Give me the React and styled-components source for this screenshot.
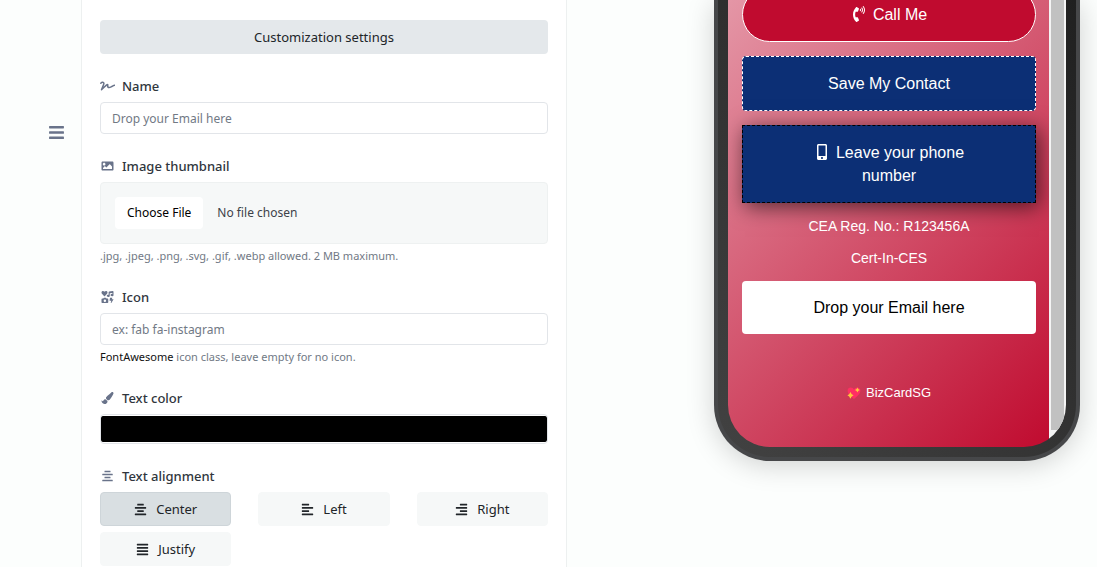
import React, { useState } from 'react';
import styled, { createGlobalStyle } from 'styled-components';
import {
  FaAlignCenter,
  FaAlignJustify,
  FaAlignLeft,
  FaAlignRight,
  FaBars,
  FaIcons,
  FaImage,
  FaMobileAlt,
  FaPaintBrush,
  FaPhoneVolume,
  FaSignature,
} from 'react-icons/fa';

const alignments = [
  { value: 'center', label: 'Center', icon: FaAlignCenter },
  { value: 'left', label: 'Left', icon: FaAlignLeft },
  { value: 'right', label: 'Right', icon: FaAlignRight },
  { value: 'justify', label: 'Justify', icon: FaAlignJustify },
];

const App = () => {
  const [name, setName] = useState('Drop your Email here');
  const [color, setColor] = useState('#000000');
  const [align, setAlign] = useState('center');

  return (
    <>
      <GlobalStyle />
      <Page>
        <Sidebar>
          <MenuButton type="button" aria-label="Reorder block">
            <FaBars />
          </MenuButton>
        </Sidebar>

        <Settings>
          <SettingsButton type="button">Customization settings</SettingsButton>

          <Group>
            <Label htmlFor="name"><FaSignature />Name</Label>
            <TextInput id="name" value={name} onChange={(e) => setName(e.target.value)} />
          </Group>

          <Group>
            <Label htmlFor="thumbnail"><FaImage />Image thumbnail</Label>
            <FileInput id="thumbnail" type="file" />
            <Help>.jpg, .jpeg, .png, .svg, .gif, .webp allowed. 2 MB maximum.</Help>
          </Group>

          <Group>
            <Label htmlFor="icon"><FaIcons />Icon</Label>
            <TextInput id="icon" placeholder="ex: fab fa-instagram" />
            <Help><HelpLink href="#icons">FontAwesome</HelpLink> icon class, leave empty for no icon.</Help>
          </Group>

          <Group>
            <Label htmlFor="color"><FaPaintBrush />Text color</Label>
            <ColorInput id="color" type="color" value={color} onChange={(e) => setColor(e.target.value)} />
          </Group>

          <Group role="radiogroup" aria-labelledby="alignment">
            <Label as="div" id="alignment"><FaAlignCenter />Text alignment</Label>
            <Options>
              {alignments.map(({ value, label, icon: Icon }) => (
                <Option key={value} $active={align === value}>
                  <Radio
                    type="radio"
                    name="align"
                    value={value}
                    checked={align === value}
                    onChange={() => setAlign(value)}
                  />
                  <Icon />
                  {label}
                </Option>
              ))}
            </Options>
          </Group>
        </Settings>

        <Preview>
          <Phone>
            <Screen>
              <Card>
                <CallButton type="button"><FaPhoneVolume />Call Me</CallButton>
                <SaveButton type="button">Save My Contact</SaveButton>
                <PhoneButton type="button"><FaMobileAlt />Leave your phone number</PhoneButton>
                <CardText>CEA Reg. No.: R123456A</CardText>
                <CardText>Cert-In-CES</CardText>
                <EmailButton type="button" $color={color}>{name}</EmailButton>
                <Branding href="#bizcard">
                  <Heart />
                  BizCardSG
                </Branding>
              </Card>
              <ScrollTrack>
                <ScrollThumb />
              </ScrollTrack>
            </Screen>
          </Phone>
        </Preview>
      </Page>
    </>
  );
};

const Heart = () => (
  <svg width="14" height="14" viewBox="0 0 14 14" aria-hidden="true">
    <path
      d="M7 13 C4 10.5 0.6 8 0.6 4.6 C0.6 2.6 2 1.4 3.7 1.4 C5.2 1.4 6.4 2.2 7 3.4 C7.6 2.2 8.8 1.4 10.3 1.4 C12 1.4 13.4 2.6 13.4 4.6 C13.4 8 10 10.5 7 13 Z"
      fill="#ff2f63"
    />
    <path d="M3.4 6 L4.7 8.2 L6.6 9.3 L4.7 10.4 L3.4 12.8 L2.2 10.4 L0.4 9.3 L2.2 8.2 Z" fill="#ffc83d" />
    <path d="M10.4 1.4 L11.2 3.1 L12.8 4 L11.2 4.9 L10.4 6.6 L9.6 4.9 L8 4 L9.6 3.1 Z" fill="#ffc83d" />
  </svg>
);

// Styled components
const GlobalStyle = createGlobalStyle`
  * {
    box-sizing: border-box;
  }

  body {
    margin: 0;
    background: #fcfefd;
    color: #212529;
    font-family: 'Noto Sans', 'Open Sans', sans-serif;
    font-size: 13px;
    line-height: 20px;
  }

  button,
  input {
    font: inherit;
  }
`;

const Page = styled.div`
  display: grid;
  grid-template-columns: 81px minmax(0, 486fr) minmax(0, 530fr);
  min-height: 100vh;
`;

const Sidebar = styled.aside`
  display: flex;
  justify-content: flex-end;
  align-items: flex-start;
  padding: 123px 15px 0 0;
`;

const MenuButton = styled.button`
  display: flex;
  padding: 1px;
  border: 0;
  background: none;
  color: #69738a;
  font-size: 17px;
  cursor: pointer;
`;

const Settings = styled.main`
  padding: 20px 18px 1px;
  border: solid #edf0f0;
  border-width: 0 1px;
  background: #fff;
`;

const SettingsButton = styled.button`
  display: block;
  width: 100%;
  height: 34px;
  border: 0;
  border-radius: 4px;
  background: #e4e8eb;
  color: #212529;
  cursor: pointer;
`;

const Group = styled.div`
  margin-top: 22px;
`;

const Label = styled.label`
  display: flex;
  align-items: center;
  gap: 7px;
  margin-bottom: 6px;
  color: #30363d;
  font-weight: 500;

  svg {
    width: 15px;
    height: 12px;
    color: #69738a;
  }
`;

const TextInput = styled.input`
  display: block;
  width: 100%;
  height: 32px;
  padding: 0 11px;
  border: 1px solid #e2e5e9;
  border-radius: 4px;
  background: #fff;
  color: #717985;
  font-size: 12px;

  &::placeholder {
    color: #717985;
    opacity: 1;
  }
`;

const FileInput = styled.input`
  display: block;
  width: 100%;
  height: 62px;
  padding: 14px;
  border: 1px solid #eef1f1;
  border-radius: 4px;
  background: #f6f8f8;
  color: #3c4249;
  font-size: 12px;

  &::file-selector-button {
    height: 32px;
    margin-right: 14px;
    padding: 0 12px;
    border: 0;
    border-radius: 4px;
    background: #fff;
    color: #000;
    font: inherit;
  }
`;

const Help = styled.div`
  margin-top: 3px;
  color: #717985;
  font-size: 11px;
  line-height: 18px;
`;

const HelpLink = styled.a`
  color: #111;
  text-decoration: none;
`;

const ColorInput = styled.input`
  display: block;
  width: 100%;
  height: 30px;
  padding: 1px 0;
  border: 1px solid #e2e5e9;
  border-radius: 4px;
  background: #fff;

  &::-webkit-color-swatch-wrapper {
    padding: 0;
  }

  &::-webkit-color-swatch {
    border: 0;
    border-radius: 2px;
  }
`;

const Options = styled.div`
  display: grid;
  grid-template-columns: repeat(3, 1fr);
  gap: 6px 27px;
`;

const Option = styled.label`
  display: flex;
  justify-content: center;
  align-items: center;
  gap: 9px;
  height: 34px;
  border: 1px solid ${(props) => (props.$active ? '#ced5d9' : '#f6f8f8')};
  border-radius: 4px;
  background: ${(props) => (props.$active ? '#d9dfe2' : '#f6f8f8')};
  cursor: pointer;

  svg {
    width: 13px;
    height: 13px;
  }
`;

const Radio = styled.input`
  position: absolute;
  opacity: 0;
  pointer-events: none;
`;

const Preview = styled.section`
  display: flex;
  justify-content: flex-end;
  align-items: flex-start;
  padding-right: 17px;
  overflow: hidden;
`;

const Phone = styled.div`
  width: 100%;
  max-width: 366px;
  padding: 0 4px 4px;
  border-radius: 0 0 56px 56px;
  background: #464749;
  box-shadow: 0 4px 28px rgba(0, 0, 0, 0.18);
`;

const Screen = styled.div`
  display: flex;
  border: solid transparent;
  border-width: 0 10px 10px;
  border-radius: 0 0 52px 52px;
  overflow: hidden;
  background: linear-gradient(45deg, #424242, #202020) border-box;
`;

const Card = styled.div`
  display: flex;
  flex: 1;
  flex-direction: column;
  align-items: center;
  gap: 14px;
  padding: 0 13px 45px 14px;
  background: linear-gradient(135deg, #e496a6, #c00b2f);
  color: #fff;
  font-family: 'Liberation Sans', Arial, sans-serif;
`;

const CardButton = styled.button`
  width: 100%;
  padding: 15px 60px;
  border: 0;
  border-radius: 4px;
  color: #fff;
  font-size: 16px;
  line-height: 23px;
  cursor: pointer;

  svg {
    margin-right: 6px;
    vertical-align: -2px;
  }
`;

/* The card is scrolled to its end, so the first button runs off the top */
const CallButton = styled(CardButton)`
  margin-top: -13px;
  border: 1px solid #fff;
  border-radius: 28px;
  background: #c00b2f;
`;

const SaveButton = styled(CardButton)`
  border: 1px dashed #fff;
  background: #0c2f75;
`;

const PhoneButton = styled(CardButton)`
  border: 1px dashed #000;
  border-radius: 0;
  background: #0c2f75;
  box-shadow: 3px 4px 20px rgba(0, 0, 0, 0.6);
`;

const EmailButton = styled(CardButton)`
  background: #fff;
  color: ${(props) => props.$color};
`;

const CardText = styled.p`
  margin: 0;
  font-size: 14px;
  line-height: 18px;
`;

const Branding = styled.a`
  display: flex;
  align-items: center;
  gap: 5px;
  margin-top: 36px;
  color: #fff;
  font-size: 13px;
  line-height: 18px;
  text-decoration: none;
`;

const ScrollTrack = styled.div`
  width: 17px;
  padding: 0 2px 17px;
  background: #f4f4f4;
`;

const ScrollThumb = styled.div`
  width: 13px;
  height: 100%;
  background: #c1c1c1;
`;

export default App;
